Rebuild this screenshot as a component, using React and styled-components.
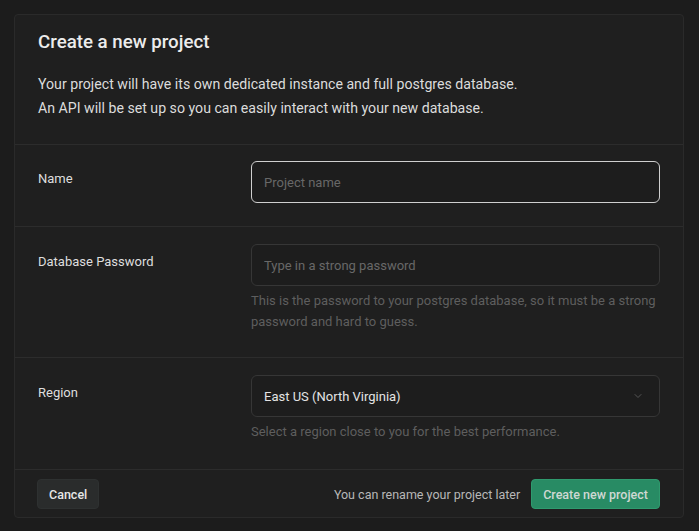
import React, { useState } from "react";
import styled, { createGlobalStyle } from "styled-components";

const GlobalStyle = createGlobalStyle`
  html, body {
    margin: 0;
    background: #1c1c1c;
    font-family: Roboto, "Noto Sans", "Liberation Sans", sans-serif;
    -webkit-font-smoothing: antialiased;
  }
  * { box-sizing: border-box; }
`;

const Page = styled.div`
  padding: 14px 15px 14px 14px;
`;

const Card = styled.div`
  background: #1f1f1f;
  border: 1px solid #2a2a2a;
  border-radius: 4px;
  width: 670px;
`;

const Header = styled.div`
  padding: 15px 24px 24px 23px;
  border-bottom: 1px solid #2c2c2c;
`;

const Title = styled.h1`
  margin: 0 0 18px;
  font-size: 18.7px;
  font-weight: 500;
  line-height: 24px;
  color: #ececec;
`;

const Lead = styled.p`
  margin: 0;
  font-size: 14.15px;
  line-height: 24px;
  color: #dcdcdc;
`;

const Row = styled.div`
  display: grid;
  grid-template-columns: 213px 1fr;
  padding: ${({ $pt }) => $pt}px 23px ${({ $pb }) => $pb}px 23px;
  border-bottom: 1px solid #2c2c2c;
`;

const Label = styled.label`
  font-size: 13px;
  line-height: 20px;
  color: #dedede;
  padding-top: 8px;
`;

const Field = styled.div`
  display: flex;
  flex-direction: column;
`;

const Input = styled.input`
  height: 42px;
  width: 100%;
  border-radius: 6px;
  border: 1px solid ${({ $focus }) => ($focus ? "#cfcfcf" : "#363636")};
  background: #1d1d1d;
  color: #e0e0e0;
  font: inherit;
  font-size: 13px;
  padding: 0 12px;
  outline: none;
  &::placeholder { color: #686868; }
`;

const Select = styled.div`
  height: 42px;
  border-radius: 6px;
  border: 1px solid #363636;
  background: #1d1d1d;
  color: #e4e4e4;
  font-size: 13px;
  display: flex;
  align-items: center;
  justify-content: space-between;
  padding: 0 15px 0 12px;
  svg { color: #555; }
`;

const Help = styled.p`
  margin: 4px 0 0;
  font-size: 13px;
  line-height: 21px;
  color: #5e5e5e;
`;

const Footer = styled.div`
  display: flex;
  align-items: center;
  padding: 9px 23px 8px 22px;
`;

const Note = styled.span`
  margin-left: auto;
  margin-right: 11px;
  font-size: 12.5px;
  color: #b8b8b8;
`;

const Button = styled.button`
  height: 30px;
  border-radius: 4px;
  border: 1px solid ${({ $primary }) => ($primary ? "#2f9a6e" : "#2e3131")};
  background: ${({ $primary }) => ($primary ? "#288b64" : "#2a2c2c")};
  color: ${({ $primary }) => ($primary ? "#cfd8d3" : "#e6e6e6")};
  font: inherit;
  font-size: 12.5px;
  font-weight: 500;
  padding: 0 11px;
  cursor: pointer;
`;

const Chevron = () => (
  <svg width="12" height="12" viewBox="0 0 24 24" fill="none" stroke="currentColor" strokeWidth="2" strokeLinecap="round" strokeLinejoin="round">
    <path d="M6 9l6 6 6-6" />
  </svg>
);

export default function App() {
  const [name, setName] = useState("");
  const [pw, setPw] = useState("");
  return (
    <Page>
      <GlobalStyle />
      <Card>
        <Header>
          <Title>Create a new project</Title>
          <Lead>Your project will have its own dedicated instance and full postgres database.</Lead>
          <Lead>An API will be set up so you can easily interact with your new database.</Lead>
        </Header>
        <Row $pt={16} $pb={23}>
          <Label>Name</Label>
          <Field>
            <Input $focus placeholder="Project name" value={name} onChange={(e) => setName(e.target.value)} />
          </Field>
        </Row>
        <Row $pt={17} $pb={25}>
          <Label>Database Password</Label>
          <Field>
            <Input type="password" placeholder="Type in a strong password" value={pw} onChange={(e) => setPw(e.target.value)} />
            <Help>This is the password to your postgres database, so it must be a strong password and hard to guess.</Help>
          </Field>
        </Row>
        <Row $pt={17} $pb={27}>
          <Label>Region</Label>
          <Field>
            <Select>
              <span>East US (North Virginia)</span>
              <Chevron />
            </Select>
            <Help>Select a region close to you for the best performance.</Help>
          </Field>
        </Row>
        <Footer>
          <Button>Cancel</Button>
          <Note>You can rename your project later</Note>
          <Button $primary>Create new project</Button>
        </Footer>
      </Card>
    </Page>
  );
}
